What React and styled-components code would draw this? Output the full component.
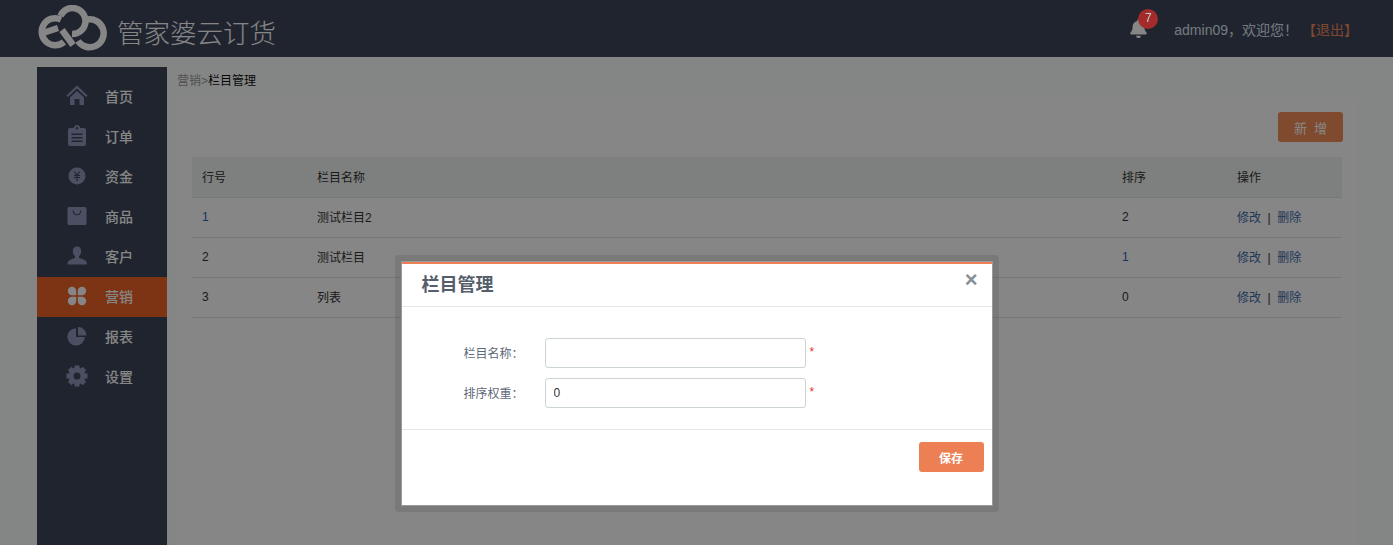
import styled, { createGlobalStyle } from 'styled-components'
import { FaBell } from 'react-icons/fa'

const GlobalStyle = createGlobalStyle`
    *, *::before, *::after {
        box-sizing: border-box;
    }
    html, body, #root {
        height: 100%;
        margin: 0;
    }
    body {
        background: #fcfffd;
        font-family: "Liberation Sans", "Noto Sans CJK SC", sans-serif;
        font-size: 12px;
        color: #333;
        overflow: hidden;
    }
`

const GEAR_TEETH = [0, 45, 90, 135, 180, 225, 270, 315]

const NAV_ITEMS = [
    {
        label: '首页',
        icon: (
            <>
                <path d="M11 .500.500 10.500 2 12l9-8.500L20 12l1.500-1.500z" />
                <path d="M4 12.500 11 6l7 6.500V20h-4.500v-6h-5v6H4z" />
            </>
        ),
    },
    {
        label: '订单',
        icon: (
            <path
                fillRule="evenodd"
                d="M4 3h3.500C8 1.500 9.400 0 11 0s3 1.500 3.500 3H18a2 2 0 0 1 2 2v14a2 2 0 0 1-2 2H4a2 2 0 0 1-2-2V5a2 2 0 0 1 2-2zm1.500 5.500V10h11V8.500zm0 3.500v1.500h11V12zm0 3.500V17h11v-1.500zM11 2a1.200 1.200 0 1 0 0 2.400A1.200 1.200 0 0 0 11 2z"
            />
        ),
    },
    {
        label: '资金',
        icon: (
            <path
                fillRule="evenodd"
                d="M11 2.500a8.500 8.500 0 1 1 0 17 8.500 8.500 0 0 1 0-17zM7.800 6.500l2.100 3.600H8v1h2.500v1H8v1h2.500V16h1.100v-2.900h2.400v-1h-2.400v-1H14v-1h-1.900l2.100-3.600h-1.200L11 9.600 9 6.500z"
            />
        ),
    },
    {
        label: '商品',
        icon: (
            <path
                fillRule="evenodd"
                d="M3 2h16a1.500 1.500 0 0 1 1.500 1.500v15A1.500 1.500 0 0 1 19 20H3a1.500 1.500 0 0 1-1.500-1.500v-15A1.500 1.500 0 0 1 3 2zm3.500 3.200c.3 3 2 5 4.500 5s4.200-2 4.500-5h-1c-.3 2.400-1.600 4-3.500 4s-3.200-1.600-3.500-4z"
            />
        ),
    },
    {
        label: '客户',
        icon: (
            <path d="M11 1.500c2.600 0 4.200 2 4.200 4.800 0 2.200-1 4-2.200 5v1.500l5.500 2.200c1.500.6 2.500 1.800 2.500 4.500H1.500c0-2.700 1-3.900 2.500-4.500L9 12.800v-1.500c-1.200-1-2.200-2.800-2.200-5C6.800 3.500 8.400 1.500 11 1.500z" />
        ),
    },
    {
        label: '营销',
        active: true,
        icon: (
            <path d="M10.200 10.200H6a4.200 4.200 0 1 1 4.200-4.200zM11.800 10.200V6A4.200 4.200 0 1 1 16 10.200zM10.200 11.800V16A4.200 4.200 0 1 1 6 11.800zM11.800 11.800H16a4.200 4.200 0 1 1-4.200 4.200z" />
        ),
    },
    { label: '报表', icon: <path d="M10 3.200V12h8.800A8.700 8.700 0 1 1 10 3.200zM12 2a8.500 8.500 0 0 1 8.500 8.500H12z" /> },
    {
        label: '设置',
        icon: (
            <>
                <circle cx="11" cy="11" r="6" fill="none" stroke="#8d98b8" strokeWidth="5" />
                {GEAR_TEETH.map((angle) => (
                    <rect key={angle} x="8.500" y="0.500" width="5" height="5" transform={`rotate(${angle} 11 11)`} />
                ))}
            </>
        ),
    },
]

const ROWS = [
    { no: '1', name: '测试栏目2', sort: '2', noLink: true },
    { no: '2', name: '测试栏目', sort: '1', sortLink: true },
    { no: '3', name: '列表', sort: '0' },
]

export default function App() {
    return (
        <>
            <GlobalStyle />
            <Page>
                <Header>
                    <Brand>
                        <svg width="72" height="46" viewBox="0 0 72 46" fill="none" stroke="#fff" strokeWidth="6.5">
                            <path d="M24 14.500A13.500 13.500 0 1 0 27 37" />
                            <path d="M6 28 21 23" />
                            <path d="M23.500 11A13 13 0 1 1 35 29" />
                            <path d="M25 25 36 40" />
                            <path d="M50 14.500A14 14 0 1 1 41 36" />
                        </svg>
                        <BrandName>管家婆云订货</BrandName>
                    </Brand>
                    <UserArea>
                        <Bell>
                            <FaBell size={19} />
                            <Badge>7</Badge>
                        </Bell>
                        <Welcome>admin09，欢迎您！</Welcome>
                        <Logout>【退出】</Logout>
                    </UserArea>
                </Header>
                <Body>
                    <Sidebar>
                        {NAV_ITEMS.map((item) => (
                            <NavItem key={item.label} $active={item.active}>
                                <NavIcon viewBox="0 0 22 22" $active={item.active}>{item.icon}</NavIcon>
                                {item.label}
                            </NavItem>
                        ))}
                    </Sidebar>
                    <Main>
                        <Breadcrumb>
                            <span>营销&gt;</span>栏目管理
                        </Breadcrumb>
                        <Panel>
                            <Toolbar>
                                <AddButton>新&nbsp;&nbsp;增</AddButton>
                            </Toolbar>
                            <Table>
                                <thead>
                                    <tr>
                                        <HeadCell $width={115}>行号</HeadCell>
                                        <HeadCell $width={805}>栏目名称</HeadCell>
                                        <HeadCell $width={115}>排序</HeadCell>
                                        <HeadCell>操作</HeadCell>
                                    </tr>
                                </thead>
                                <tbody>
                                    {ROWS.map((row) => (
                                        <tr key={row.no}>
                                            <Cell $link={row.noLink}>{row.no}</Cell>
                                            <Cell>{row.name}</Cell>
                                            <Cell $link={row.sortLink}>{row.sort}</Cell>
                                            <Cell>
                                                <ActionLink>修改</ActionLink>
                                                <Divider>|</Divider>
                                                <ActionLink>删除</ActionLink>
                                            </Cell>
                                        </tr>
                                    ))}
                                </tbody>
                            </Table>
                        </Panel>
                    </Main>
                </Body>
            </Page>
            <Backdrop>
                <DialogShell>
                    <Dialog>
                        <DialogHeader>
                            <DialogTitle>栏目管理</DialogTitle>
                            <CloseButton>×</CloseButton>
                        </DialogHeader>
                        <DialogBody>
                            <FormRow>
                                <FormLabel>栏目名称：</FormLabel>
                                <TextInput defaultValue="" />
                                <Required>*</Required>
                            </FormRow>
                            <FormRow>
                                <FormLabel>排序权重：</FormLabel>
                                <TextInput defaultValue="0" />
                                <Required>*</Required>
                            </FormRow>
                        </DialogBody>
                        <DialogFooter>
                            <SaveButton>保存</SaveButton>
                        </DialogFooter>
                    </Dialog>
                </DialogShell>
            </Backdrop>
        </>
    )
}

const Page = styled.div`
    display: flex;
    flex-direction: column;
    height: 100%;
`

const Header = styled.header`
    display: flex;
    flex: none;
    height: 57px;
    padding: 0 36px 0 37px;
    justify-content: space-between;
    align-items: center;
    background: #3d465b;
`

const Brand = styled.div`
    display: flex;
    align-items: center;
    gap: 8px;
    margin-top: -1px;
`

const BrandName = styled.span`
    font-size: 26.5px;
    font-weight: 300;
    color: #fff;
    margin-top: 6px;
`

const UserArea = styled.div`
    display: flex;
    align-items: center;
    font-size: 14px;
    margin-right: -1px;
`

const Bell = styled.div`
    display: flex;
    margin: 0 26px 0 0;
    position: relative;
    color: #fff;
`

const Badge = styled.span`
    position: absolute;
    top: -10px;
    left: 9px;
    z-index: 20;
    width: 20px;
    height: 20px;
    border-radius: 50%;
    background: #a32b2b;
    color: #ccc;
    font-size: 12px;
    line-height: 19px;
    text-align: center;
`

const Welcome = styled.span`
    color: #dfe6f0;
`

const Logout = styled.a`
    margin-left: 4px;
    color: #ef8a5c;
`

const Body = styled.div`
    display: flex;
    flex: 1;
    min-height: 0;
    gap: 10px;
    padding: 10px 36px 0 37px;
`

const Sidebar = styled.nav`
    flex: none;
    width: 130px;
    padding-top: 10px;
    background: #3d465b;
`

const NavItem = styled.a`
    display: flex;
    height: 40px;
    padding: 0 0 2px 29px;
    align-items: center;
    gap: 17px;
    font-size: 14px;
    font-weight: 500;
    color: #fff;
    background: ${(props) => (props.$active ? '#ec6328' : 'transparent')};
`

const NavIcon = styled.svg`
    flex: none;
    width: 22px;
    height: 22px;
    fill: ${(props) => (props.$active ? '#fff' : '#8d98b8')};
`

const Main = styled.main`
    display: flex;
    flex: 1;
    min-width: 0;
    flex-direction: column;
`

const Breadcrumb = styled.div`
    height: 30px;
    line-height: 28px;
    color: #111;

    span {
        color: #999;
    }
`

const Panel = styled.section`
    flex: 1;
    padding: 15px;
    background: #fff;
`

const Toolbar = styled.div`
    display: flex;
    justify-content: flex-end;
    margin: 0 -1px 15px 0;
`

const AddButton = styled.button`
    width: 65px;
    height: 30px;
    padding: 0;
    border: none;
    border-radius: 3px;
    background: #f48d5a;
    color: #fff;
    font-family: inherit;
    font-size: 13px;
`

const Table = styled.table`
    width: 100%;
    border-collapse: collapse;
    table-layout: fixed;
`

const HeadCell = styled.th`
    width: ${(props) => (props.$width ? `${props.$width}px` : 'auto')};
    height: 40px;
    padding: 0 10px;
    border-bottom: 1px solid #e0e6e6;
    background: #eff4f2;
    font-weight: 400;
    text-align: left;
`

const Cell = styled.td`
    height: 40px;
    padding: 0 10px 1px;
    border-bottom: 1px solid #e0e6e6;
    color: ${(props) => (props.$link ? '#2a66b8' : '#333')};
`

const ActionLink = styled.a`
    color: #3d69a8;
`

const Divider = styled.span`
    margin: 0 6.5px;
    color: #333;
`

const Backdrop = styled.div`
    display: flex;
    position: fixed;
    inset: 0;
    z-index: 10;
    padding-top: 255px;
    justify-content: center;
    align-items: flex-start;
    background: rgba(0, 0, 0, 0.475);
`

const DialogShell = styled.div`
    width: 604px;
    border: 6px solid rgba(0, 0, 0, 0.1);
    border-radius: 4px;
    background-clip: padding-box;
`

const Dialog = styled.div`
    display: flex;
    height: 245px;
    flex-direction: column;
    border: 1px solid #999;
    background: #fff;
`

const DialogHeader = styled.div`
    display: flex;
    height: 45px;
    padding: 0 14px 0 20px;
    justify-content: space-between;
    border-top: 2px solid #ec8054;
    border-bottom: 1px solid #e4e6e8;
`

const DialogTitle = styled.h3`
    margin: 0;
    font-size: 18px;
    line-height: 43px;
    color: #555e6b;
`

const CloseButton = styled.span`
    font-size: 22px;
    font-weight: 700;
    line-height: 31px;
    color: #888f96;
`

const DialogBody = styled.div`
    display: flex;
    height: 123px;
    padding-top: 31px;
    flex-direction: column;
    gap: 10px;
    border-bottom: 1px solid #e4e6e8;
`

const FormRow = styled.div`
    display: flex;
    height: 30px;
    align-items: center;
`

const FormLabel = styled.label`
    width: 122px;
    margin: 0 21px 1px 0;
    text-align: right;
    color: #5d6877;
`

const TextInput = styled.input`
    width: 261px;
    height: 30px;
    padding: 0 8px;
    border: 1px solid #ccd4d8;
    border-radius: 3px;
    font-family: inherit;
    font-size: 12px;
    color: #333;
`

const Required = styled.span`
    margin: 0 0 2px 4px;
    color: #e8302c;
    font-size: 12px;
`

const DialogFooter = styled.div`
    display: flex;
    padding: 12px 8px 0 0;
    justify-content: flex-end;
`

const SaveButton = styled.button`
    width: 65px;
    height: 30px;
    padding: 0;
    border: none;
    border-radius: 3px;
    background: #ec8054;
    color: #fff;
    font-family: inherit;
    font-size: 12px;
    font-weight: 700;
`
